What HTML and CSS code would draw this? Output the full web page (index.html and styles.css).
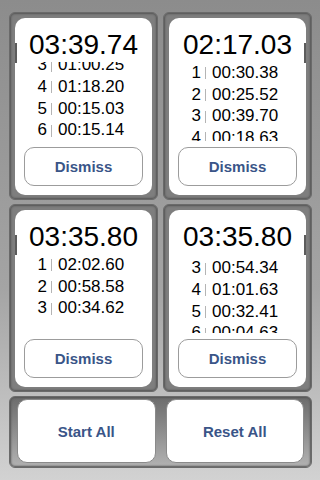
FILE: index.html
```html
<!DOCTYPE html>
<html lang="en">
<head>
  <meta charset="UTF-8">
  <title>Multi Stopwatch</title>
  <link rel="stylesheet" href="styles.css">
</head>
<body>
  <div class="screen">
    <div class="frame">
      <div class="card edge-left">
        <div class="time">03:39.74</div>
        <div class="laps">
          <div class="lap-list scroll-end">
            <div class="lap"><span class="num">1</span><span class="sep"></span><span>00:27.40</span></div>
            <div class="lap"><span class="num">2</span><span class="sep"></span><span>00:23.72</span></div>
            <div class="lap"><span class="num">3</span><span class="sep"></span><span>01:00.25</span></div>
            <div class="lap"><span class="num">4</span><span class="sep"></span><span>01:18.20</span></div>
            <div class="lap"><span class="num">5</span><span class="sep"></span><span>00:15.03</span></div>
            <div class="lap"><span class="num">6</span><span class="sep"></span><span>00:15.14</span></div>
          </div>
        </div>
        <button class="dismiss">Dismiss</button>
      </div>
    </div>

    <div class="frame">
      <div class="card edge-right">
        <div class="time">02:17.03</div>
        <div class="laps">
          <div class="lap-list">
            <div class="lap"><span class="num">1</span><span class="sep"></span><span>00:30.38</span></div>
            <div class="lap"><span class="num">2</span><span class="sep"></span><span>00:25.52</span></div>
            <div class="lap"><span class="num">3</span><span class="sep"></span><span>00:39.70</span></div>
            <div class="lap"><span class="num">4</span><span class="sep"></span><span>00:18.63</span></div>
            <div class="lap"><span class="num">5</span><span class="sep"></span><span>00:22.80</span></div>
          </div>
        </div>
        <button class="dismiss">Dismiss</button>
      </div>
    </div>

    <div class="frame">
      <div class="card edge-left">
        <div class="time">03:35.80</div>
        <div class="laps">
          <div class="lap-list">
            <div class="lap"><span class="num">1</span><span class="sep"></span><span>02:02.60</span></div>
            <div class="lap"><span class="num">2</span><span class="sep"></span><span>00:58.58</span></div>
            <div class="lap"><span class="num">3</span><span class="sep"></span><span>00:34.62</span></div>
          </div>
        </div>
        <button class="dismiss">Dismiss</button>
      </div>
    </div>

    <div class="frame">
      <div class="card edge-right">
        <div class="time">03:35.80</div>
        <div class="laps">
          <div class="lap-list scroll-mid">
            <div class="lap"><span class="num">1</span><span class="sep"></span><span>00:31.20</span></div>
            <div class="lap"><span class="num">2</span><span class="sep"></span><span>00:31.59</span></div>
            <div class="lap"><span class="num">3</span><span class="sep"></span><span>00:54.34</span></div>
            <div class="lap"><span class="num">4</span><span class="sep"></span><span>01:01.63</span></div>
            <div class="lap"><span class="num">5</span><span class="sep"></span><span>00:32.41</span></div>
            <div class="lap"><span class="num">6</span><span class="sep"></span><span>00:04.63</span></div>
          </div>
        </div>
        <button class="dismiss">Dismiss</button>
      </div>
    </div>

    <div class="frame controls">
      <button class="big-btn">Start All</button>
      <button class="big-btn">Reset All</button>
    </div>
  </div>
</body>
</html>
```

FILE: styles.css
```css
body {
  margin: 0;
  width: 320px;
  height: 480px;
  overflow: hidden;
  font-family: "Liberation Sans", Arial, sans-serif;
  background: linear-gradient(#8c8c8c, #a4a4a4 60%, #d2d2d2);
}

.screen {
  display: grid;
  grid-template-columns: 149px 149px;
  grid-template-rows: 188px 188px 72px;
  column-gap: 5px;
  row-gap: 4px;
  padding: 12px 9px 0;
}

.frame {
  box-sizing: border-box;
  padding: 5px 5px 4px 5px;
  background: #7e7e7e;
  border: 1px solid #6a6a6a;
  border-radius: 6px;
  box-shadow: inset 0 0 2px 1px #555;
}

.card {
  position: relative;
  height: 177px;
  background: #fff;
  border-radius: 10px;
  display: flex;
  flex-direction: column;
}

/* little dark strip next to the time label */
.card::before {
  content: "";
  position: absolute;
  top: 25px;
  width: 2px;
  height: 20px;
  background: #5c5c5c;
}
.card.edge-left::before { left: 0; }
.card.edge-right::before { right: 0; }

.time {
  height: 34px;
  padding-top: 10px;
  font-size: 28px;
  line-height: 34px;
  text-align: center;
  color: #000;
}

.laps {
  height: 79px;
  overflow: hidden;
}

.lap-list.scroll-end { margin-top: -51px; }
.lap-list.scroll-mid { margin-top: -40px; }

.lap {
  display: flex;
  align-items: center;
  height: 21.7px;
  font-size: 17px;
  color: #000;
}

.lap .num {
  width: 32px;
  text-align: right;
}

.lap .sep {
  width: 1px;
  height: 12px;
  margin: 1px 6px 0 4px;
  background: #b4b4b4;
}

.dismiss {
  box-sizing: border-box;
  height: 39px;
  margin: 6px 9px 0;
  background: #fff;
  border: 1px solid #9c9c9c;
  border-radius: 10px;
  font-family: inherit;
  font-size: 15px;
  font-weight: bold;
  color: #3a5588;
  cursor: pointer;
}

.controls {
  grid-column: 1 / -1;
  display: flex;
  gap: 10px;
  padding: 2px 7px 4px;
  background: linear-gradient(#6c6c6c, #8e8e8e 50%, #b2b2b2);
}

.big-btn {
  flex: 1;
  background: #fff;
  border: 1px solid #8a8a8a;
  border-radius: 10px;
  font-family: inherit;
  font-size: 15px;
  font-weight: bold;
  color: #3a5588;
  cursor: pointer;
}
```
